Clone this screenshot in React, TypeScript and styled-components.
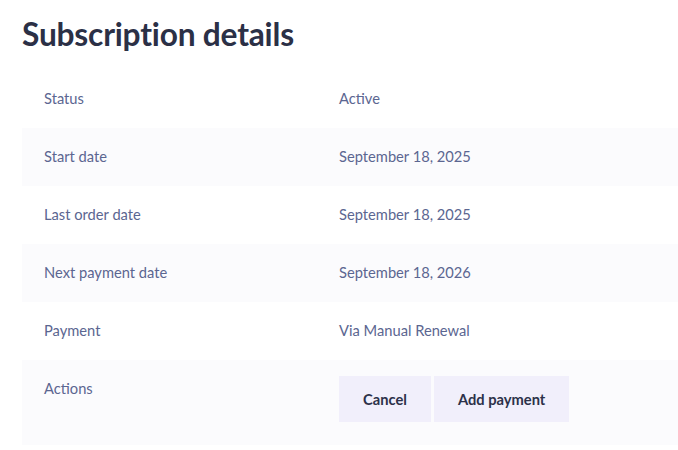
import React from "react";
import styled, { createGlobalStyle } from "styled-components";

const Global = createGlobalStyle`
  html, body { margin: 0; padding: 0; background: #ffffff; }
  body { font-family: "Lato", "Open Sans", sans-serif; -webkit-font-smoothing: antialiased; }
`;

const Page = styled.section`
  padding: 14px 0 0 22px;
`;

const Title = styled.h2`
  margin: 0 0 15.5px 0;
  font-size: 31.7px;
  line-height: 40px;
  font-weight: 700;
  color: #2b3046;
  letter-spacing: -0.2px;
`;

const Table = styled.div`
  display: flex;
  flex-direction: column;
`;

const Row = styled.div<{ $alt?: boolean; $tall?: boolean }>`
  display: grid;
  grid-template-columns: 317px 1fr;
  background: ${(p) => (p.$alt ? "#fbfbfd" : "#ffffff")};
  min-height: ${(p) => (p.$tall ? "85.5px" : "57.5px")};
`;

const Cell = styled.div`
  padding: 16px 22px 18px;
  font-size: 14.7px;
  line-height: 24px;
  color: #5b6691;
`;

const ValueCell = styled(Cell)`
  padding-left: 0;
`;

const Actions = styled.div`
  display: flex;
  gap: 3px;
`;

const Button = styled.button`
  height: 46px;
  padding: 0 24px;
  border: none;
  background: #f1effb;
  color: #2c3149;
  font-family: inherit;
  font-size: 14.7px;
  font-weight: 700;
  cursor: pointer;
`;

const rows: { label: string; value: string }[] = [
  { label: "Status", value: "Active" },
  { label: "Start date", value: "September 18, 2025" },
  { label: "Last order date", value: "September 18, 2025" },
  { label: "Next payment date", value: "September 18, 2026" },
  { label: "Payment", value: "Via Manual Renewal" },
];

export default function App() {
  return (
    <>
      <Global />
      <Page>
        <Title>Subscription details</Title>
        <Table>
          {rows.map((r, i) => (
            <Row key={r.label} $alt={i % 2 === 1}>
              <Cell>{r.label}</Cell>
              <ValueCell>{r.value}</ValueCell>
            </Row>
          ))}
          <Row $alt $tall>
            <Cell>Actions</Cell>
            <ValueCell>
              <Actions>
                <Button>Cancel</Button>
                <Button>Add payment</Button>
              </Actions>
            </ValueCell>
          </Row>
        </Table>
      </Page>
    </>
  );
}
